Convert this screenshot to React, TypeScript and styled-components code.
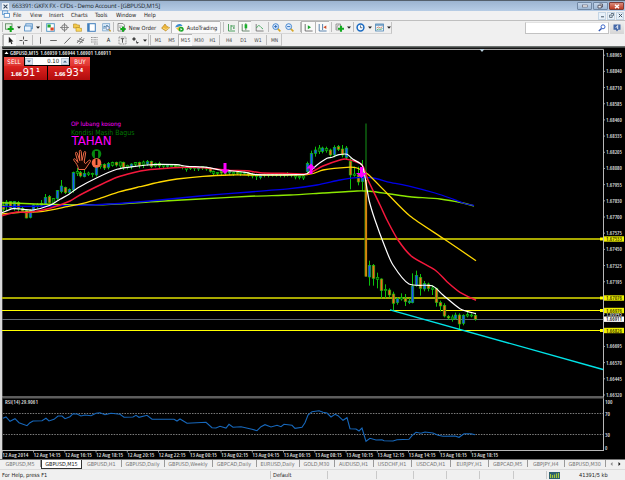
import React from 'react';
import styled, { createGlobalStyle } from 'styled-components';

const Global = createGlobalStyle`
  * { box-sizing: border-box; }
  body { margin: 0; overflow: hidden; background: #f0f0f0; }
`;

const Frame = styled.div`
  width: 625px;
  height: 480px;
  display: flex;
  flex-direction: column;
  background: #f0f0f0;
  font-family: 'DejaVu Sans Condensed', 'DejaVu Sans', sans-serif;
  font-stretch: condensed;
  font-size: 5.7px;
  color: #222;
  white-space: nowrap;
  overflow: hidden;
`;

const TitleBar = styled.div`
  height: 11px;
  display: flex;
  align-items: center;
  border-top: 1px solid #55606c;
  background: linear-gradient(#9cb4d0, #b7cde6);
  padding-left: 2px;
`;
const TitleText = styled.div`
  flex: 1;
  padding-left: 3px;
  font-family: 'Open Sans', sans-serif;
  font-stretch: normal;
  font-size: 6px;
  letter-spacing: -0.2px;
  text-rendering: geometricPrecision;
  line-height: 10px;
  color: #141c28;
`;
const WindowButton = styled.div<{ $danger?: boolean }>`
  width: 15px;
  height: 8px;
  margin-right: 1px;
  display: flex;
  align-items: center;
  justify-content: center;
  border: 1px solid ${p => (p.$danger ? '#7c3c38' : '#7188a4')};
  border-radius: 1px;
  background: ${p => (p.$danger ? 'linear-gradient(#d98b7c, #bd3b22)' : 'linear-gradient(#c2d3e8, #9fb8d5)')};
`;

const MenuBar = styled.div`
  height: 10px;
  display: flex;
  align-items: center;
  border-bottom: 1px solid #bfbfbf;
  background: #f1f1f2;
  padding-left: 2px;
`;
const MenuItem = styled.div<{ $w: number }>`
  width: ${p => p.$w}px;
  line-height: 9px;
`;
const ChildButton = styled.div`
  width: 8px;
  height: 8px;
  margin-right: 1px;
  display: flex;
  align-items: center;
  justify-content: center;
  border: 1px solid #c5d5e4;
  background: #e8f1fa;
`;
const Spacer = styled.div`
  flex: 1;
`;

const ToolRow = styled.div<{ $h: number }>`
  height: ${p => p.$h}px;
  display: flex;
  align-items: center;
  padding-left: 2px;
`;
const Strip = styled.div`
  display: flex;
  align-items: center;
  height: 12px;
  border-right: 1px solid #c4c4c4;
  border-bottom: 1px solid #d6d6d6;
`;
const Slot = styled.div<{ $w: number; $on?: boolean }>`
  width: ${p => p.$w}px;
  height: 12px;
  display: flex;
  align-items: center;
  justify-content: center;
  gap: 3px;
  border: solid ${p => (p.$on ? '#b4b4b4' : 'transparent')};
  border-width: 1px 0 0 1px;
  background: ${p => (p.$on ? '#f9f9f9' : 'transparent')};
`;
const Period = styled(Slot)`
  font-size: 5px;
  color: #444;
`;
const Rule = styled.div`
  width: 1px;
  height: 10px;
  background: #bdbdbd;
`;
const Search = styled.div`
  width: 84px;
  height: 12px;
  margin-top: 1px;
  display: flex;
  justify-content: flex-end;
  align-items: center;
  padding-right: 2px;
  background: #fff;
  border: 1px solid #c2c2c2;
  border-top-color: #e2e2e2;
`;
const Chat = styled.div`
  width: 14px;
  height: 12px;
  margin: 1px 1px 0 1px;
  display: flex;
  align-items: center;
  justify-content: center;
  background: linear-gradient(#eee, #d5d5d5);
`;

const ChartWindow = styled.div`
  position: relative;
  height: 413px;
  background: #000;
`;
const Drawing = styled.svg`
  display: block;
`;
const TradePanel = styled.div`
  position: absolute;
  left: 4px;
  top: 11px;
  width: 86px;
  display: grid;
  grid-template-columns: 1fr 1fr;
  column-gap: 1px;
  color: #fff;
`;
const Order = styled.div`
  grid-column: 1 / 3;
  height: 9px;
  display: flex;
  align-items: stretch;
`;
const OrderSide = styled.div`
  width: 20px;
  background: linear-gradient(#f4544c, #de3430);
  line-height: 10px;
  text-align: center;
  font-size: 6.2px;
`;
const Volume = styled.div`
  flex: 1;
  height: 8px;
  margin: 0 1px;
  display: flex;
  align-items: center;
  background: #fff;
  color: #111;
`;
const Amount = styled.div`
  flex: 1;
  text-align: right;
  padding-right: 2px;
  font-size: 5.9px;
  line-height: 8px;
`;
const Stepper = styled.div`
  width: 8px;
  height: 7px;
  display: flex;
  align-items: center;
  justify-content: center;
  background: #dbe5f1;
  border: 1px solid #b8c6d8;
`;
const Quote = styled.div`
  height: 14px;
  display: flex;
  justify-content: center;
  align-items: baseline;
  gap: 1px;
  line-height: 14px;
  background: linear-gradient(#dd2320, #b00c0c);
`;
const Small = styled.span`
  font-size: 5.5px;
  font-weight: bold;
  letter-spacing: -0.3px;
`;
const Big = styled.span`
  font-size: 11px;
`;
const Sup = styled.span`
  font-size: 5.5px;
  font-weight: bold;
  transform: translateY(-4px);
`;

const Tabs = styled.div`
  height: 10px;
  display: flex;
  border-top: 1px solid #777;
  background: #f0f0f0;
  color: #777;
`;
const Tab = styled.div<{ $w: number; $active?: boolean }>`
  width: ${p => p.$w}px;
  height: ${p => (p.$active ? 9 : 7)}px;
  line-height: 8px;
  text-align: center;
  font-size: 5.4px;
  color: ${p => (p.$active ? '#111' : '#747474')};
  background: ${p => (p.$active ? '#fff' : 'transparent')};
  border: solid ${p => (p.$active ? '#333' : '#999')};
  border-width: ${p => (p.$active ? '0 1px 1px 1px' : '0 1px 0 0')};
`;
const TabArrows = styled.div`
  flex: 1;
  display: flex;
  align-items: center;
  justify-content: space-evenly;
  height: 8px;
`;
const StatusBar = styled.div`
  height: 11px;
  display: flex;
  align-items: center;
  border-top: 1px solid #dcdcdc;
  font-size: 5.6px;
`;
const StatusCell = styled.div<{ $w: number }>`
  width: ${p => p.$w}px;
  height: 8px;
  line-height: 8px;
  padding-left: 2px;
  border-right: 1px solid #c9c9c9;
`;
const Traffic = styled.div`
  display: flex;
  align-items: center;
  gap: 19px;
  padding-left: 2px;
`;

const Caret = () => (
  <svg width="4" height="3" viewBox="0 0 4 3"><path d="M0 .4h4L2 2.8z" fill="#222" /></svg>
);

const icons: Record<string, React.ReactNode> = {
  app: <><rect width="9" height="9" fill="#eef3f8" /><path d="M2 2l5 5M7 2L2 7" stroke="#34465e" strokeWidth="1.3" /></>,
  windows: <><rect x=".5" y="1" width="6" height="4" fill="#dcecfb" stroke="#4a8ac8" strokeWidth=".8" /><rect x="2.5" y="4" width="6" height="4.2" fill="#fff" stroke="#4a8ac8" strokeWidth=".9" /></>,
  newChart: <><rect x=".5" y=".8" width="6.5" height="5.4" fill="#e6f1e4" stroke="#548056" strokeWidth=".8" /><path d="M5.7 3v6M2.7 6h6" stroke="#10a818" strokeWidth="2.1" /></>,
  profiles: <><rect x="1.8" y=".8" width="6.5" height="5" fill="#cce0f5" stroke="#4986be" strokeWidth=".8" /><rect x=".6" y="3" width="6.5" height="5" fill="#e8f3fd" stroke="#4986be" strokeWidth=".8" /></>,
  market: <><rect x=".7" y=".7" width="7.6" height="7.6" fill="#fff" stroke="#4b93c4" strokeWidth=".9" /><rect x="1.5" y="1.5" width="3.2" height="3" fill="#20a830" /><rect x="4.5" y="4.5" width="3.2" height="3" fill="#e04620" /></>,
  target: <><circle cx="4.5" cy="4.5" r="2.8" fill="none" stroke="#777" strokeWidth="1" /><path d="M4.5 0v9M0 4.5h9" stroke="#777" strokeWidth=".8" /></>,
  navigator: <><path d="M.5 1h3l1 1h2v3h-6z" fill="#f1c84b" stroke="#b58b22" strokeWidth=".6" /><path d="M3 4.5h3l.8.8H8.6v3H3z" fill="#fbd95c" stroke="#b58b22" strokeWidth=".6" /></>,
  terminal: <><rect x=".7" y=".7" width="7.6" height="7.6" fill="#fff" stroke="#3f7ebd" strokeWidth="1" /><path d="M1.8 1v7" stroke="#3f7ebd" strokeWidth="1.8" /></>,
  tester: <><rect x=".7" y=".7" width="7" height="7.2" fill="#dcebf8" stroke="#6d9dc8" strokeWidth=".7" /><path d="M2 6V3l1.4 1L5 2l1 2" fill="none" stroke="#3f79a8" strokeWidth=".8" /><circle cx="5.6" cy="5" r="1.7" fill="#eef" stroke="#55779c" strokeWidth=".8" /><path d="M6.8 6.3l1.9 2" stroke="#c79a28" strokeWidth="1.2" /></>,
  order: <><path d="M1 .5h5l1.5 1.6V8H1z" fill="#f4f4f4" stroke="#777" strokeWidth=".8" /><path d="M2 3h3M2 4.5h2" stroke="#888" strokeWidth=".6" /><path d="M6 3.4v5.4M3.3 6.1h5.4" stroke="#12a81c" strokeWidth="2" /></>,
  gold: <><path d="M.6 5.2L4 1l1.6 2.3 3 1.4-3.9 3.2z" fill="#eeb73b" stroke="#ad7812" strokeWidth=".6" /><path d="M2 5l3 1.6 3-1.8" stroke="#fff0b0" strokeWidth=".6" fill="none" /></>,
  auto: <><path d="M.3 4.5C.7 1 5.7-.5 7.6 2.8z" fill="#3f8ecf" /><path d="M1 5.3l3 2.9 3-3-2-2z" fill="#efc443" /><circle cx="6.2" cy="6.2" r="2.5" fill="#1ca82a" /><path d="M5.5 5v2.4l1.9-1.2z" fill="#fff" /></>,
  bars: <path d="M1.5 1v7H8M4 2v5M4 3h2M7 2v4M6 5h1" fill="none" stroke="#3c9950" strokeWidth=".9" />,
  candles: <><path d="M1.2 1v7H8.6M4.8.2v7" fill="none" stroke="#456b4a" strokeWidth=".8" /><rect x="3.6" y="1.3" width="2.6" height="4" fill="#17b02a" /></>,
  line: <><path d="M1.2 1v7H8.6" fill="none" stroke="#666" strokeWidth=".8" /><path d="M1.5 5C4 0 5 4 8 6" fill="none" stroke="#3aa353" strokeWidth=".9" /></>,
  zoomIn: <><path d="M5.6 5.6l2.8 2.8" stroke="#d7a727" strokeWidth="1.6" /><circle cx="3.7" cy="3.6" r="2.9" fill="#dcecff" stroke="#3c7fc9" strokeWidth=".9" /><path d="M3.7 2v3.2M2.1 3.6h3.2" stroke="#2465b8" strokeWidth=".9" /></>,
  zoomOut: <><path d="M5.6 5.6l2.8 2.8" stroke="#d7a727" strokeWidth="1.6" /><circle cx="3.7" cy="3.6" r="2.9" fill="#dcecff" stroke="#3c7fc9" strokeWidth=".9" /><path d="M2.1 3.6h3.2" stroke="#2465b8" strokeWidth=".9" /></>,
  scroll: <><path d="M1.2 1v7H8.6" fill="none" stroke="#666" strokeWidth=".9" /><path d="M3.8 2.2v4l3.2-2z" fill="#18a72c" /></>,
  shift: <><path d="M1.2 1v7H8.6M4.6 1v6" fill="none" stroke="#4776a5" strokeWidth=".9" /><path d="M8.3 2.4v3.6L5.4 4.2z" fill="#cf4b28" /></>,
  indicators: <><path d="M1 1h4.5v6H1zM2 6C2 2 3 2 4.5 2" fill="#eee" stroke="#777" strokeWidth=".7" /><path d="M6 2.8v6M3 5.8h6" stroke="#12aa1f" strokeWidth="2.1" /></>,
  clock: <><circle cx="4.5" cy="4.5" r="3.4" fill="#f2f8ff" stroke="#1c6cc2" strokeWidth="1.5" /><path d="M4.5 2.4v2.3h1.8" fill="none" stroke="#345" strokeWidth=".7" /></>,
  template: <><rect x=".6" y="1" width="7.8" height="7" fill="#eaf3fb" stroke="#4c84b5" strokeWidth=".8" /><path d="M.6 2h7.8" stroke="#4c84b5" strokeWidth="1.2" /><path d="M1.5 5l2-1 2 1 2-1.4" fill="none" stroke="#cb6a40" strokeWidth=".7" /><path d="M1.5 7l2-1 2 .5 2-1" fill="none" stroke="#3f9d4f" strokeWidth=".7" /></>,
  cursor: <path d="M2.8.8v6.3l1.5-1.3L5.4 8.2l1.1-.5-1.1-2.3h2z" fill="#222" />,
  cross: <path d="M4.5.5v3M4.5 5.5v3M.5 4.5h3M5.5 4.5h3" stroke="#444" strokeWidth=".9" />,
  vline: <path d="M4.5 1.2v6.6" stroke="#555" strokeWidth=".9" />,
  hline: <path d="M1.2 4.5h6.6" stroke="#555" strokeWidth=".9" />,
  trend: <path d="M1.4 7.6l6-6.2" stroke="#555" strokeWidth=".9" />,
  channel: <path d="M1 7l5-6M3.2 8.2l5-6M1 4.7l6 1.7M3 2.7l5 2" stroke="#555" strokeWidth=".7" />,
  fibo: <path d="M1 1.5h7M1 3.8h7M1 6h7M4 8h4" stroke="#666" strokeWidth=".7" strokeDasharray="1 .4" />,
  label: <><rect x="1" y="1" width="7" height="7" fill="none" stroke="#666" strokeWidth=".7" strokeDasharray="1 .6" /><path d="M2.8 2.7h3.4M4.5 2.7v4" stroke="#444" strokeWidth=".9" /></>,
  arrows: <path d="M1 3l2-2 2 2-2 2zM5 4l1 2h2l-2 2-1-2z" fill="#444" />,
};
const Icon = ({ name, size = 9 }: { name: string; size?: number }) => (
  <svg width={size} height={size} viewBox="0 0 9 9">{icons[name]}</svg>
);

/* Bars run left to right: x, high, low, body top, body bottom, fill (b rising, r falling, g flat). */
type Bar = [number, number, number, number, number, string];
const scaled = (ox: number, oy: number, rows: Bar[]): Bar[] =>
  rows.map(([x, h, l, t, b, c]) => [ox + x / 3, oy + h / 3, oy + l / 3, oy + t / 3, oy + b / 3, c]);

const opening = scaled(0, 140, [
  [9, 185, 215, 195, 208, 'r'], [19, 180, 212, 186, 197, 'b'], [31, 183, 210, 185, 205, 'r'], [43, 183, 212, 185, 205, 'b'],
  [54, 183, 216, 187, 207, 'r'], [66, 200, 215, 205, 213, 'r'], [78, 208, 235, 212, 234, 'r'], [90, 208, 235, 212, 232, 'b'],
  [101, 192, 218, 195, 215, 'b'], [113, 190, 206, 195, 200, 'g'], [125, 180, 200, 190, 196, 'r'], [137, 162, 195, 172, 193, 'b'],
  [148, 165, 190, 170, 188, 'r'], [160, 174, 190, 176, 189, 'g'], [172, 150, 180, 152, 176, 'b'], [184, 120, 160, 138, 155, 'b'],
  [196, 140, 162, 142, 158, 'r'], [207, 145, 162, 148, 157, 'b'], [219, 95, 158, 98, 150, 'b'], [231, 84, 108, 95, 100, 'g'],
  [242, 93, 112, 98, 108, 'r'], [254, 88, 112, 100, 110, 'b'], [266, 95, 108, 99, 103, 'g'], [278, 98, 112, 100, 104, 'g'],
  [289, 75, 110, 80, 105, 'b'], [301, 68, 86, 74, 80, 'g'], [313, 70, 90, 74, 84, 'r'], [325, 66, 88, 70, 82, 'b'],
  [337, 65, 80, 68, 76, 'g'], [348, 65, 80, 67, 75, 'r'], [360, 65, 86, 66, 78, 'g'], [371, 65, 90, 67, 82, 'r'],
  [383, 74, 88, 76, 82, 'g'], [395, 70, 88, 72, 80, 'b'], [407, 66, 80, 68, 73, 'g'], [418, 65, 85, 67, 76, 'r'],
  [430, 62, 84, 66, 74, 'g'], [442, 60, 78, 65, 72, 'b'], [454, 62, 84, 64, 80, 'r'], [466, 68, 82, 70, 78, 'g'], [477, 65, 84, 70, 78, 'r'],
]);
const quiet = scaled(150, 140, [
  [39, 72, 84, 75, 79, 'g'], [51, 74, 86, 76, 80, 'b'], [63, 74, 83, 76, 80, 'g'], [75, 72, 84, 76, 80, 'r'],
  [86, 74, 84, 75, 80, 'g'], [98, 76, 88, 80, 83, 'b'], [110, 80, 95, 82, 88, 'g'], [121, 78, 90, 81, 85, 'r'],
  [133, 80, 93, 82, 86, 'g'], [145, 80, 93, 83, 87, 'b'], [156, 78, 90, 80, 84, 'g'], [168, 80, 92, 82, 87, 'r'],
  [180, 82, 98, 86, 94, 'r'], [190, 92, 108, 95, 100, 'g'], [202, 96, 106, 98, 101, 'g'], [214, 92, 108, 95, 99, 'r'],
  [226, 94, 107, 96, 100, 'g'], [237, 92, 105, 95, 99, 'b'], [249, 94, 108, 97, 102, 'g'], [261, 94, 105, 96, 101, 'r'],
  [272, 95, 108, 98, 101, 'g'], [284, 94, 104, 97, 100, 'b'], [296, 96, 110, 99, 104, 'r'], [308, 98, 115, 103, 108, 'g'],
  [320, 101, 120, 105, 110, 'g'], [331, 102, 118, 106, 112, 'b'], [343, 100, 112, 103, 107, 'r'], [355, 100, 112, 102, 106, 'g'],
  [366, 100, 110, 102, 106, 'b'], [378, 101, 110, 103, 106, 'r'], [390, 99, 112, 102, 106, 'g'], [402, 100, 112, 102, 106, 'r'],
  [413, 96, 110, 100, 105, 'g'], [425, 100, 112, 103, 107, 'b'],
]);
const rally = scaled(290, 120, [
  [17, 163, 178, 167, 171, 'g'], [29, 168, 178, 170, 173, 'g'], [41, 163, 180, 168, 174, 'g'], [52, 125, 162, 130, 155, 'b'],
  [64, 92, 145, 100, 137, 'b'], [76, 80, 110, 90, 100, 'b'], [87, 75, 102, 84, 95, 'g'], [98, 80, 100, 84, 94, 'b'],
  [110, 80, 98, 86, 92, 'g'], [122, 86, 110, 90, 105, 'r'], [133, 76, 112, 82, 105, 'b'], [145, 75, 93, 80, 88, 'r'],
  [157, 75, 112, 87, 105, 'r'], [169, 78, 120, 84, 112, 'b'], [181, 115, 208, 124, 165, 'r'], [193, 140, 170, 162, 166, 'g'],
  [205, 140, 196, 165, 186, 'r'], [217, 120, 212, 150, 185, 'b'],
]);
const decline = scaled(360, 220, [
  [29, 122, 197, 136, 171, 'b'], [41, 132, 197, 136, 175, 'r'], [52, 158, 205, 172, 178, 'g'], [64, 175, 235, 177, 212, 'r'],
  [76, 193, 235, 208, 212, 'g'], [88, 205, 232, 210, 225, 'r'], [100, 215, 272, 222, 250, 'r'], [112, 232, 254, 235, 248, 'b'],
  [123, 220, 242, 233, 237, 'g'], [135, 222, 258, 234, 245, 'r'], [147, 235, 252, 243, 248, 'b'], [158, 160, 250, 198, 248, 'b'],
  [169, 152, 200, 166, 197, 'b'], [181, 162, 227, 172, 205, 'r'], [193, 183, 214, 190, 207, 'b'], [205, 188, 214, 192, 206, 'r'],
  [217, 195, 225, 204, 208, 'g'], [229, 203, 260, 205, 248, 'r'], [241, 242, 274, 248, 258, 'r'], [253, 250, 292, 256, 288, 'r'],
  [264, 285, 300, 289, 294, 'r'], [276, 284, 305, 291, 297, 'g'], [287, 278, 300, 285, 296, 'b'], [299, 280, 327, 285, 312, 'r'],
  [310, 283, 316, 286, 310, 'b'], [322, 275, 292, 284, 288, 'g'], [334, 280, 292, 285, 288, 'g'], [347, 278, 302, 286, 298, 'r'],
]);
const bars = [...opening, ...quiet, ...rally, ...decline];
const fills: Record<string, string> = { b: '#1a50ff', r: '#f86818', g: '#043804' };

const levels = [
  { y: 239, price: '1.67533', color: '#a8a800', w: 2 },
  { y: 298, price: '1.67076', color: '#a8a800', w: 2 },
  { y: 310.5, price: '1.66976', color: '#ffff00', w: 1 },
  { y: 330.5, price: '1.66826', color: '#ffff00', w: 1 },
];
const prices: [string, number][] = [['1.68965', 0], ['1.68840', 1], ['1.68710', 2], ['1.68585', 3], ['1.68460', 4], ['1.68335', 5], ['1.68205', 6],
  ['1.68080', 7], ['1.67955', 8], ['1.67830', 9], ['1.67700', 10], ['1.67575', 11], ['1.67450', 12], ['1.67325', 13], ['1.67195', 14],
  ['1.66945', 16], ['1.66695', 18], ['1.66570', 19], ['1.66445', 20], ['1.66320', 21]];
const times = ['12 Aug 2014', '12 Aug 14:15', '12 Aug 16:15', '12 Aug 18:15', '12 Aug 20:15', '12 Aug 22:15', '13 Aug 00:15', '13 Aug 02:15',
  '13 Aug 04:15', '13 Aug 06:15', '13 Aug 08:15', '13 Aug 10:15', '13 Aug 12:15', '13 Aug 14:15', '13 Aug 16:15', '13 Aug 18:15'];

const white = '2,212.7 13,208.7 23,209.3 33,210 50,205.3 60,199.3 69,194.3 78,187.7 97,177.7 117,169.3 133,166.7 147,165 160,164.3 177,164.7 187,166.3 207,167.3 220,170 233,171 247,172.7 257,174.7 297,174.7 307,173.7 317,165 327,158.3 332,157.3 339,154.7 347,154.3 353,159.3 362,165 365,177 369,200 375,220 385,247 393,265 409,284 432,285.7 443,295 460,308.7 476,313.7';
const red = '2,215.7 17,212 30,212.3 50,208.3 70,201 80,195 100,185 117,177.3 133,172.7 147,170 167,168.3 187,167.3 207,168 227,170.3 247,170.7 260,172.7 283,173.3 307,173.7 323,166 340,160 347,159.3 362,165 368,180 380,205 387,220 398,240 412,256.7 435,270 447,281.7 460,292.3 476,300.3';
const gold = '2,214 20,212.3 43,211.3 67,206.7 83,203.3 100,198.3 120,191.7 140,186.7 160,182 177,179 203,176.3 230,175 250,175 307,174.7 323,170 347,167.3 357,168 368,174.3 387,193.3 410,216 443,238.3 476,260.7';
const blue = '2,206.7 67,205.7 110,204 160,200 200,196 250,192 290,188.7 317,185 340,180 357,177.7 373,178 390,182.3 410,186.3 435,193 450,198 463,203 474,205.5';
const lime = '2,202.7 50,204.3 100,204.7 160,201.3 200,199 250,196.3 290,195 323,193 357,191 370,191.3 390,194 410,196.7 440,199 463,203 474,206';
const rsi = '3,418.3 6,417 10,421.3 15,418.7 19,422.7 27,425.7 30,422.7 33,421 42,420.7 46,418.3 49,421 54,419.3 58,416 62,416 65,418.7 70,416.7 73,413.7 77,414 81,416 85,415 91,415.7 96,413.3 100,412.7 105,414.7 111,413.3 120,414.3 124,417.3 133,417 136,415.3 139,417.3 147,415.3 152,419.3 174,419.3 177,421 180,419 187,423.3 206,422.3 212,427.7 216,428 220,426.3 226,428 229,424.3 233,427.3 241,426.7 252,429.3 257,430.7 261,426.7 265,424.7 271,427 277,425.3 281,426.7 284,424.3 292,425.3 295,428.3 302,427.3 305,422.7 308,415 312,411.7 319,410.7 323,412.3 327,413 331,417 335,414.3 338,415.7 343,420.3 347,417.7 350,428.7 356,429 359,431 362,428 366,441.3 370,438.3 376,440 382,439.7 384,440.7 393,441 397,439.7 409,439.3 412,435.7 416,432.3 421,433.3 425,432 433,433 438,435.3 443,436.3 455,436 459,437.3 464,433.7 471,433.7 475,434.7';

/* Turns a point list into a gently rounded path through every point. */
const smooth = (list: string) => {
  const p = list.split(' ').map(s => s.split(',').map(Number));
  const at = (i: number) => p[Math.max(0, Math.min(p.length - 1, i))];
  const k = 8;
  return p.slice(1).reduce((d, b, j) => {
    const a = at(j), before = at(j - 1), after = at(j + 2);
    return `${d}C${a[0] + (b[0] - before[0]) / k} ${a[1] + (b[1] - before[1]) / k} ${b[0] - (after[0] - a[0]) / k} ${b[1] - (after[1] - a[1]) / k} ${b[0]} ${b[1]}`;
  }, `M${p[0][0]} ${p[0][1]}`);
};

const tiny = { fontFamily: 'Open Sans, sans-serif', fontSize: 5.4, fontWeight: 600 };
const mark = 'DejaVu Sans Condensed, DejaVu Sans, sans-serif';

/* The drawing uses the y scale of the whole terminal window; it begins at y = 46. */
const Chart = () => (
  <Drawing width="625" height="413" viewBox="0 46 625 413">
    <rect y="46" width="625" height="1.6" fill="#6c7270" />
    <rect y="46" width="2" height="413" fill="#d9d9d9" />
    <path d="M2.5 47.500V459" stroke="#444" />
    <path d="M2 49.400H603.500V450.500M2 397H604M2 450.500H604" fill="none" stroke="#b8b8b8" />
    <path d="M2 398H604" stroke="#606060" />
    <path d="M479.500 49h5l-2.500 3z" fill="#b9d0dd" />
    <path d="M4.500 54h4l-2-2.500z" fill="#fff" />
    <text x="10" y="55.300" textLength="101" lengthAdjust="spacingAndGlyphs" fill="#eee" {...tiny}>GBPUSD,M15&#160; 1.66939 1.66944 1.66901 1.66911</text>

    <g shapeRendering="crispEdges">
      {levels.map(l => <path key={l.y} d={`M2 ${l.y}H603`} stroke={l.color} strokeWidth={l.w} />)}
      <path d="M2 319.500H603" stroke="#646b73" />
    </g>
    {bars.map(([x, h, l, t, b, c], i) => (
      <g key={i}>
        <path d={`M${Math.floor(x) + 0.5} ${h}V${l}`} stroke="#0cc00c" />
        <rect x={Math.floor(x) - 0.8} y={t} width="2.600" height={Math.max(b - t, 1)} fill={fills[c]} stroke="#0cc80c" strokeWidth=".6" />
      </g>
    ))}
    <path d="M366 123.500V277" stroke="#0a4a0c" strokeWidth="2" />
    <path d="M366 180V276.500" stroke="#d8860c" strokeWidth="2.200" />
    <path d="M364.700 180V276.500" stroke="#2c7c0c" strokeWidth=".7" />

    <g fill="none" strokeLinejoin="round">
      <path d={smooth(lime)} stroke="#8ce800" strokeWidth="1.400" />
      <path d={smooth(blue)} stroke="#0000e8" strokeWidth="1.300" />
      <path d={smooth(gold)} stroke="#ffd800" strokeWidth="1.300" />
      <path d={smooth(red)} stroke="#f5183c" strokeWidth="1.500" />
      <path d={smooth(white)} stroke="#fff" strokeWidth="1.200" />
      <path d="M390 309.800L603 369.500" stroke="#00e4e8" strokeWidth="1.400" />
    </g>

    <g fill="#ff00ff">
      <path d="M223.500 163h3v6.500h3L225 174l-4.500-4.500h3z" />
      <path d="M311 163.500l4.500 5h-3v5.500h-3v-5.500h-3z" />
      <path d="M360 167h3v6h4l-5.500 5-5.500-5h4z" />
    </g>
    <text x="71" y="126.300" textLength="50" lengthAdjust="spacingAndGlyphs" fontFamily={mark} fontSize="6" fill="#f0f">OP lubang kosong</text>
    <text x="71" y="134.600" textLength="63.500" lengthAdjust="spacingAndGlyphs" fontFamily={mark} fontSize="7.200" fill="#007800">Kondisi Masih Bagus</text>
    <text x="71.500" y="145" textLength="40" lengthAdjust="spacingAndGlyphs" fontFamily={mark} fontSize="11.500" fill="#f0f">TAHAN</text>
    <path d="M78.500 169.500c-.5-4-2.500-6.500-4.500-9-1.200-2 .8-2.300 1.700-1l2.300 3-2.500-9c-.2-1.500 1.300-1.700 1.800-.4l2.500 7.600-.5-9.500c.2-1.300 1.700-1.200 1.900 0l.8 9.300 2-8.300c.5-1.200 1.900-.8 1.700.4l-1.500 9.400 1.300 1.700 3.200-3.200c1.200-1 2.400 0 1.600 1.200l-5.300 7.800z" fill="#140400" stroke="#f06c48" strokeWidth="1" />
    <circle cx="96.500" cy="154" r="4.800" fill="#078a10" /><path d="M96.500 151v7" stroke="#000" strokeWidth="3.200" />
    <circle cx="96.500" cy="163" r="4.800" fill="#f86c48" /><path d="M96.500 159v6" stroke="#210700" strokeWidth="1.800" />

    <g fontFamily="Open Sans, sans-serif" fontSize="5.400" fontWeight="600" fill="#ddd">
      {prices.map(([p, i]) => {
        const y = 55.2 + i * 16.18;
        return (
          <g key={p}>
            <path d={`M603 ${y}h2`} stroke="#bbb" strokeWidth=".8" />
            <text x="606" y={y + 2} textLength="16" lengthAdjust="spacingAndGlyphs">{p}</text>
          </g>
        );
      })}
      {levels.map(l => (
        <g key={l.price}>
          <rect x="600" y={l.y - 1.5} width="3" height="3" fill="#ffff00" />
          <rect x="604" y={l.y - 2.7} width="20" height="5.400" fill="#f0f000" />
          <text x="606" y={l.y + 2} textLength="16" lengthAdjust="spacingAndGlyphs" fill="#333300">{l.price}</text>
        </g>
      ))}
      <rect x="604" y="316.500" width="20" height="5.400" fill="#fff" />
      <text x="606" y="321.200" textLength="16" lengthAdjust="spacingAndGlyphs" fill="#111">1.66911</text>
      <text x="5" y="404.300" textLength="33" lengthAdjust="spacingAndGlyphs">RSI(14) 29.9061</text>
      <text x="605" y="403.600" textLength="7.500" lengthAdjust="spacingAndGlyphs">100</text>
      <text x="605" y="415.700" textLength="5" lengthAdjust="spacingAndGlyphs">70</text>
      <text x="605" y="436.500" textLength="5" lengthAdjust="spacingAndGlyphs">30</text>
      <text x="605" y="449.500">0</text>
      {times.map((t, i) => {
        const x = 2.3 + i * 31.25;
        return (
          <g key={t + i}>
            <path d={`M${x} 450v2.500`} stroke="#bbb" strokeWidth=".8" />
            <text x={x} y="457.300" textLength={i ? 27 : 26} lengthAdjust="spacingAndGlyphs">{t}</text>
          </g>
        );
      })}
    </g>
    <path d="M3 413.500H603M3 434.500H603" stroke="#8a8a8a" strokeDasharray="1.500 1.200" strokeWidth=".9" />
    <polyline points={rsi} fill="none" stroke="#1768bc" strokeWidth="1.100" />
  </Drawing>
);

const menus: [string, number][] = [['File', 17], ['View', 19], ['Insert', 22], ['Charts', 24], ['Tools', 21], ['Window', 28], ['Help', 20]];
const tabs: [string, number][] = [['GBPUSD,M5', 41], ['GBPUSD,M15', 41], ['GBPUSD,H1', 39.5], ['GBPUSD,Daily', 43], ['GBPUSD,Weekly', 48], ['GBPCAD,Daily', 44],
  ['EURUSD,Daily', 43], ['GOLD,M30', 35], ['AUDUSD,H1', 39], ['USDCHF,H1', 38], ['USDCAD,H1', 39.5], ['EURJPY,H1', 37.5], ['GBPCAD,M5', 39.5], ['GBPJPY,H4', 36.5], ['GBPUSD,M30', 41.5]];

export default function App() {
  return (
    <Frame>
      <Global />
      <TitleBar>
        <Icon name="app" size={7} />
        <TitleText>663391: GKFX FX - CFDs - Demo Account - [GBPUSD,M15]</TitleText>
        <WindowButton><svg width="6" height="4"><rect x=".5" y="1" width="5" height="2" fill="#fff" stroke="#556" strokeWidth=".6" /></svg></WindowButton>
        <WindowButton><svg width="7" height="6"><path d="M2.500 1h3v3h-1M1 2.300h3.300v2.700H1z" fill="#eee" stroke="#445" strokeWidth=".8" /></svg></WindowButton>
        <WindowButton $danger><svg width="6" height="5"><path d="M1 .8l4 3.500M5 .8L1 4.300" stroke="#fff" strokeWidth="1.500" /></svg></WindowButton>
      </TitleBar>
      <MenuBar>
        <MenuItem $w={11}><Icon name="windows" size={8} /></MenuItem>
        {menus.map(([m, w]) => <MenuItem key={m} $w={w}>{m}</MenuItem>)}
        <Spacer />
        <ChildButton><svg width="5" height="5"><path d="M1 3.800h3" stroke="#456" strokeWidth="1" /></svg></ChildButton>
        <ChildButton><svg width="5" height="5"><path d="M2 .5h2.500v2.300M.6 2h2.600v2.400H.6z" fill="none" stroke="#456" strokeWidth=".8" /></svg></ChildButton>
        <ChildButton><svg width="5" height="5"><path d="M.8.8l3.400 3.400M4.200.8L.8 4.200" stroke="#456" strokeWidth="1" /></svg></ChildButton>
      </MenuBar>
      <ToolRow $h={13}>
        <Strip>
          <Rule />
          <Slot $w={19}><Icon name="newChart" /><Caret /></Slot>
          <Slot $w={19}><Icon name="profiles" /><Caret /></Slot>
          <Rule />
          <Slot $w={15}><Icon name="market" /></Slot>
          <Slot $w={13}><Icon name="target" /></Slot>
          <Slot $w={14}><Icon name="navigator" /></Slot>
          <Slot $w={14}><Icon name="terminal" /></Slot>
          <Slot $w={15}><Icon name="tester" /></Slot>
          <Rule />
          <Slot $w={44}><Icon name="order" />New Order</Slot>
          <Slot $w={13}><Icon name="gold" /></Slot>
          <Slot $w={49} $on><Icon name="auto" />AutoTrading</Slot>
        </Strip>
        <Slot $w={2} />
        <Strip>
          <Rule />
          <Slot $w={14}><Icon name="bars" /></Slot>
          <Slot $w={13} $on><Icon name="candles" /></Slot>
          <Slot $w={15}><Icon name="line" /></Slot>
          <Slot $w={2} />
          <Rule />
          <Slot $w={13}><Icon name="zoomIn" /></Slot>
          <Slot $w={14}><Icon name="zoomOut" /></Slot>
          <Slot $w={4} />
          <Rule />
          <Slot $w={14} $on><Icon name="scroll" /></Slot>
          <Slot $w={14} $on><Icon name="shift" /></Slot>
          <Slot $w={2} />
          <Rule />
          <Slot $w={21}><Icon name="indicators" /><Caret /></Slot>
          <Rule />
          <Slot $w={19}><Icon name="clock" /><Caret /></Slot>
          <Slot $w={18}><Icon name="template" /><Caret /></Slot>
        </Strip>
        <Spacer />
        <Search>
          <svg width="8" height="8" viewBox="0 0 8 8"><circle cx="5" cy="2.800" r="2" fill="none" stroke="#3c66c8" /><path d="M3.500 4.400L.8 7" stroke="#2e55b4" strokeWidth="1.400" /></svg>
        </Search>
        <Chat>
          <svg width="8" height="8" viewBox="0 0 8 8"><path d="M.5.500h7v5.300H5.300L4 7.500 2.700 5.800H.5z" fill="#4468a8" /><path d="M2.800 3.800L4.700 1.500v3.600" fill="none" stroke="#fff" strokeWidth=".9" /></svg>
        </Chat>
      </ToolRow>
      <ToolRow $h={12}>
        <Strip>
          <Rule />
          <Slot $w={13} $on><Icon name="cursor" /></Slot>
          <Slot $w={14}><Icon name="cross" /></Slot>
          <Slot $w={2} />
          <Rule />
          <Slot $w={13}><Icon name="vline" /></Slot>
          <Slot $w={14}><Icon name="hline" /></Slot>
          <Slot $w={13}><Icon name="trend" /></Slot>
          <Slot $w={14}><Icon name="channel" /></Slot>
          <Slot $w={14}><Icon name="fibo" /></Slot>
          <Slot $w={14}>A</Slot>
          <Slot $w={13}><Icon name="label" /></Slot>
          <Slot $w={20}><Icon name="arrows" /><Caret /></Slot>
        </Strip>
        <Slot $w={1} />
        <Strip>
          <Rule />
          <Period $w={13}>M1</Period>
          <Period $w={14}>M5</Period>
          <Period $w={14} $on>M15</Period>
          <Period $w={13}>M30</Period>
          <Period $w={14}>H1</Period>
          <Rule />
          <Period $w={17}>H4</Period>
          <Period $w={12}>D1</Period>
          <Period $w={17}>W1</Period>
          <Rule />
          <Period $w={14}>MN</Period>
        </Strip>
      </ToolRow>
      <ChartWindow>
        <Chart />
        <TradePanel>
          <Order>
            <OrderSide>SELL</OrderSide>
            <Volume>
              <Stepper><svg width="4" height="3"><path d="M0 .5h4l-2 2z" fill="#468" /></svg></Stepper>
              <Amount>0.10</Amount>
              <Stepper><svg width="4" height="3"><path d="M0 2.500h4l-2-2z" fill="#468" /></svg></Stepper>
            </Volume>
            <OrderSide>BUY</OrderSide>
          </Order>
          <Quote><Small>1.66</Small><Big>91</Big><Sup>1</Sup></Quote>
          <Quote><Small>1.66</Small><Big>93</Big><Sup>4</Sup></Quote>
        </TradePanel>
      </ChartWindow>
      <Tabs>
        {tabs.map(([t, w], i) => <Tab key={t} $w={w} $active={i === 1}>{t}</Tab>)}
        <TabArrows>
          <svg width="3" height="4"><path d="M2.500 0v4L.5 2z" fill="#888" /></svg>
          <svg width="3" height="4"><path d="M.5 0v4l2-2z" fill="#111" /></svg>
        </TabArrows>
      </Tabs>
      <StatusBar>
        <StatusCell $w={271}>For Help, press F1</StatusCell>
        <StatusCell $w={57}>Default</StatusCell>
        <StatusCell $w={49} />
        <StatusCell $w={37} />
        <StatusCell $w={33} />
        <StatusCell $w={33} />
        <StatusCell $w={34} />
        <StatusCell $w={33} />
        <Traffic>
          <svg width="11" height="7"><rect width="11" height="7" fill="#2e6070" /><path d="M1.500 6V2M3.500 6V3M5.500 6V2.500M7.500 6V1.500M9.500 6V1" stroke="#a4c838" strokeWidth="1.100" /></svg>
          41391/5 kb
        </Traffic>
      </StatusBar>
    </Frame>
  );
}
